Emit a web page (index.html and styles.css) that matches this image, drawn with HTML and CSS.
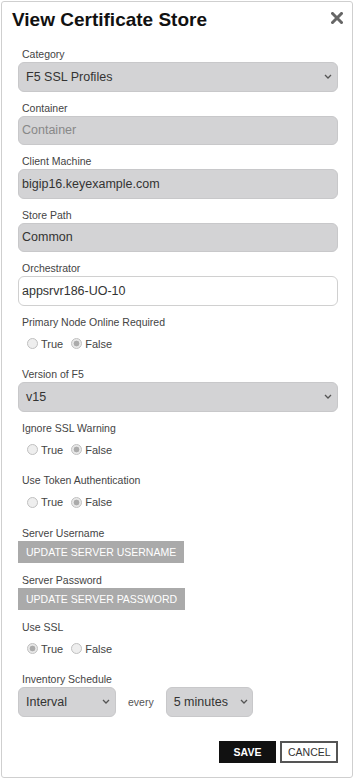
FILE: index.html
```html
<!DOCTYPE html>
<html lang="en">
<head>
    <meta charset="UTF-8">
    <meta name="viewport" content="width=device-width, initial-scale=1.0">
    <link rel="stylesheet" href="styles.css">
</head>
<body>

    <div class="modal">
        <div class="modal-header">
            <h2>View Certificate Store</h2>
            <button class="close-btn" title="Close">
                <svg width="12" height="12" viewBox="0 0 12 12">
                    <path d="M1.5 1.5 L10.5 10.5 M10.5 1.5 L1.5 10.5" stroke="#666" stroke-width="3" stroke-linecap="square"/>
                </svg>
            </button>
        </div>

        <div class="modal-body">
            <!-- store details -->
            <div class="field">
                <label>Category</label>
                <div class="select">
                    <span>F5 SSL Profiles</span>
                    <svg class="chevron" width="8" height="5" viewBox="0 0 8 5"><path d="M1 1 L4 4 L7 1" fill="none" stroke="#555" stroke-width="1.3"/></svg>
                </div>
            </div>

            <div class="field">
                <label>Container</label>
                <div class="input placeholder">Container</div>
            </div>

            <div class="field">
                <label>Client Machine</label>
                <div class="input">bigip16.keyexample.com</div>
            </div>

            <div class="field">
                <label>Store Path</label>
                <div class="input">Common</div>
            </div>

            <div class="field">
                <label>Orchestrator</label>
                <div class="input editable">appsrvr186-UO-10</div>
            </div>

            <!-- properties -->
            <div class="field">
                <label>Primary Node Online Required</label>
                <div class="radios">
                    <span class="radio"><i></i>True</span>
                    <span class="radio checked"><i></i>False</span>
                </div>
            </div>

            <div class="field">
                <label>Version of F5</label>
                <div class="select">
                    <span>v15</span>
                    <svg class="chevron" width="8" height="5" viewBox="0 0 8 5"><path d="M1 1 L4 4 L7 1" fill="none" stroke="#555" stroke-width="1.3"/></svg>
                </div>
            </div>

            <div class="field">
                <label>Ignore SSL Warning</label>
                <div class="radios">
                    <span class="radio"><i></i>True</span>
                    <span class="radio checked"><i></i>False</span>
                </div>
            </div>

            <div class="field">
                <label>Use Token Authentication</label>
                <div class="radios">
                    <span class="radio"><i></i>True</span>
                    <span class="radio checked"><i></i>False</span>
                </div>
            </div>

            <div class="field credential">
                <label>Server Username</label>
                <button class="update-btn">Update Server Username</button>
            </div>

            <div class="field credential">
                <label>Server Password</label>
                <button class="update-btn">Update Server Password</button>
            </div>

            <div class="field">
                <label>Use SSL</label>
                <div class="radios">
                    <span class="radio checked"><i></i>True</span>
                    <span class="radio"><i></i>False</span>
                </div>
            </div>

            <!-- schedule -->
            <div class="field schedule">
                <label>Inventory Schedule</label>
                <div class="schedule-row">
                    <div class="select interval">
                        <span>Interval</span>
                        <svg class="chevron" width="8" height="5" viewBox="0 0 8 5"><path d="M1 1 L4 4 L7 1" fill="none" stroke="#555" stroke-width="1.3"/></svg>
                    </div>
                    <span class="every">every</span>
                    <div class="select minutes">
                        <span>5 minutes</span>
                        <svg class="chevron" width="8" height="5" viewBox="0 0 8 5"><path d="M1 1 L4 4 L7 1" fill="none" stroke="#555" stroke-width="1.3"/></svg>
                    </div>
                </div>
            </div>

            <div class="actions">
                <button class="save-btn">SAVE</button>
                <button class="cancel-btn">CANCEL</button>
            </div>
        </div>
    </div>

</body>
</html>
```

FILE: styles.css
```css
body {
    font-family: 'Liberation Sans', Arial, sans-serif;
    background: #fff;
    color: #333;
    margin: 0;
    padding: 0;
}

.modal {
    width: 352px;
    margin: 1px 0 0 1px;
    box-sizing: border-box;
    border: 1px solid #cfcfcf;
    border-radius: 3px;
    background: #fff;
    padding-bottom: 14px;
}

.modal-header {
    display: flex;
    justify-content: space-between;
    align-items: flex-start;
    padding: 7px 9px 0 10px;
}

.modal-header h2 {
    margin: 0;
    font-size: 19px;
    line-height: 22px;
    font-weight: bold;
    color: #111;
}

.close-btn {
    background: none;
    border: none;
    padding: 0;
    margin-top: 3px;
    width: 12px;
    height: 12px;
    cursor: pointer;
}

.close-btn svg {
    display: block;
}

.modal-body {
    padding: 17px 14px 0 16px;
}

.field {
    margin-bottom: 10px;
}

.field.credential {
    margin-bottom: 11px;
}

.field label {
    display: block;
    font-size: 10.5px;
    line-height: 13px;
    color: #444;
    padding-left: 4px;
    margin-bottom: 1px;
}

.input, .select {
    box-sizing: border-box;
    height: 29.5px;
    border: 1px solid #c8c8ca;
    border-radius: 6px;
    background: #d3d3d5;
    font-size: 12.5px;
    color: #333;
    display: flex;
    align-items: center;
}

.input {
    padding: 0 3px;
}

.input.placeholder {
    color: #888;
}

.input.editable {
    background: #fff;
    border-color: #d0d0d0;
}

.select {
    justify-content: space-between;
    padding: 0 5px 0 7px;
}

.chevron {
    display: block;
}

.radios {
    display: flex;
    align-items: center;
    height: 28.5px;
    padding-left: 9px;
}

.radio {
    display: inline-flex;
    align-items: center;
    gap: 3px;
    margin-right: 8px;
    font-size: 11px;
    color: #444;
}

.radio i {
    display: block;
    box-sizing: border-box;
    width: 11px;
    height: 11px;
    border-radius: 50%;
    border: 1px solid #c0c0c0;
    background: #eeeeee;
}

.radio.checked i {
    background: radial-gradient(circle, #ababab 0, #ababab 2.6px, #e8e8e8 3.2px);
}

.update-btn {
    display: block;
    margin-top: 1px;
    height: 22px;
    padding: 0 8px;
    border: none;
    background: #aaaaaa;
    color: #fff;
    font-family: 'Liberation Sans', Arial, sans-serif;
    font-size: 10.5px;
    text-transform: uppercase;
    cursor: pointer;
}

.schedule {
    margin-top: 3px;
}

.schedule-row {
    display: flex;
    align-items: center;
}

.select.interval {
    width: 98px;
}

.select.minutes {
    width: 87px;
    padding-right: 4px;
}

.every {
    margin: 0 12px;
    font-size: 10.5px;
    color: #555;
}

.actions {
    display: flex;
    justify-content: flex-end;
    gap: 4px;
    margin-top: 24px;
}

.actions button {
    height: 22px;
    font-family: 'Liberation Sans', Arial, sans-serif;
    font-size: 10.5px;
    cursor: pointer;
}

.save-btn {
    width: 57px;
    background: #111;
    color: #fff;
    border: none;
    font-weight: bold;
}

.cancel-btn {
    width: 58px;
    background: #fff;
    color: #333;
    border: 2px solid #555;
}
```
